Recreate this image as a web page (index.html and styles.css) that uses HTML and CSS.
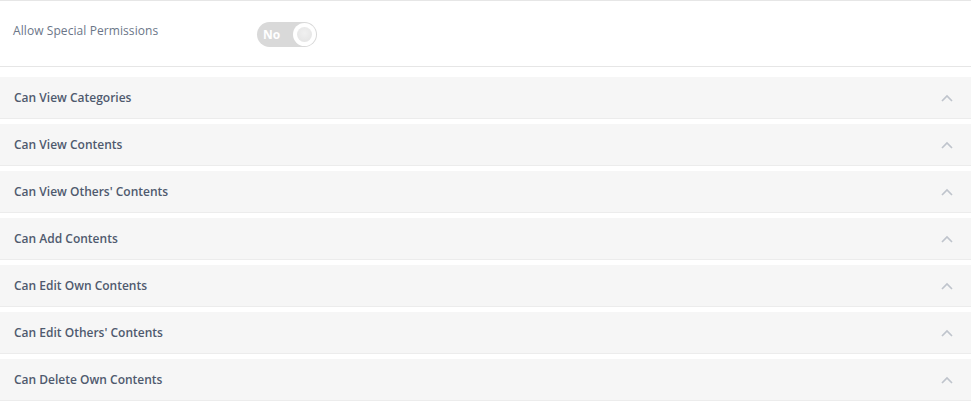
FILE: index.html
```html
<!DOCTYPE html>
<html lang="en">
<head>
    <meta charset="UTF-8">
    <meta name="viewport" content="width=device-width, initial-scale=1.0">
    <title>Permissions</title>
    <link rel="stylesheet" href="styles.css">
</head>
<body>
    <div class="wrap">
        <div class="special-row">
            <div class="special-label">Allow Special Permissions</div>
            <div class="toggle">
                <span class="toggle-text">No</span>
                <span class="knob"><span class="knob-dot"></span></span>
            </div>
        </div>

        <div class="panels">
            <div class="panel"><span class="panel-title">Can View Categories</span><svg class="chev" viewBox="0 0 12 8"><path d="M1 7 L6 2 L11 7"/></svg></div>
            <div class="panel"><span class="panel-title">Can View Contents</span><svg class="chev" viewBox="0 0 12 8"><path d="M1 7 L6 2 L11 7"/></svg></div>
            <div class="panel"><span class="panel-title">Can View Others' Contents</span><svg class="chev" viewBox="0 0 12 8"><path d="M1 7 L6 2 L11 7"/></svg></div>
            <div class="panel"><span class="panel-title">Can Add Contents</span><svg class="chev" viewBox="0 0 12 8"><path d="M1 7 L6 2 L11 7"/></svg></div>
            <div class="panel"><span class="panel-title">Can Edit Own Contents</span><svg class="chev" viewBox="0 0 12 8"><path d="M1 7 L6 2 L11 7"/></svg></div>
            <div class="panel"><span class="panel-title">Can Edit Others' Contents</span><svg class="chev" viewBox="0 0 12 8"><path d="M1 7 L6 2 L11 7"/></svg></div>
            <div class="panel"><span class="panel-title">Can Delete Own Contents</span><svg class="chev" viewBox="0 0 12 8"><path d="M1 7 L6 2 L11 7"/></svg></div>
        </div>
    </div>
</body>
</html>
```

FILE: styles.css
```css
body {
    margin: 0;
    font-family: "Open Sans", Arial, sans-serif;
    background: #fff;
}
.wrap {
    margin-right: 1px;
}
.special-row {
    display: flex;
    align-items: center;
    height: 65px;
    border-top: 1px solid #e6e6e6;
    border-bottom: 1px solid #e6e6e6;
    padding-left: 13px;
}
.special-label {
    width: 244px;
    font-size: 12px;
    letter-spacing: 0.08px;
    color: #6b7688;
    margin-top: -6px;
}
.toggle {
    display: flex;
    align-items: center;
    justify-content: space-between;
    width: 60px;
    height: 25px;
    border-radius: 13px;
    background: #d9d9d9;
    box-sizing: border-box;
    padding: 0 1px 0 6px;
    margin-top: 2px;
}
.toggle-text {
    color: #fff;
    font-weight: 700;
    font-size: 12px;
}
.knob {
    display: flex;
    align-items: center;
    justify-content: center;
    width: 23px;
    height: 23px;
    border-radius: 50%;
    background: #fff;
}
.knob-dot {
    width: 15px;
    height: 15px;
    border-radius: 50%;
    background: radial-gradient(circle at 50% 40%, #f0f0f0, #e2e2e2);
}
.panels {
    padding-top: 10px;
}
.panel {
    display: flex;
    align-items: center;
    justify-content: space-between;
    height: 41px;
    background: #f6f6f6;
    border-bottom: 1px solid #ececec;
    margin-bottom: 5px;
    padding: 0 18px 0 14px;
}
.panel-title {
    font-size: 12px;
    font-weight: 600;
    color: #4f5a6e;
}
.chev {
    width: 12px;
    height: 8px;
    fill: none;
    stroke: #bfc4cc;
    stroke-width: 1.7;
}
```
